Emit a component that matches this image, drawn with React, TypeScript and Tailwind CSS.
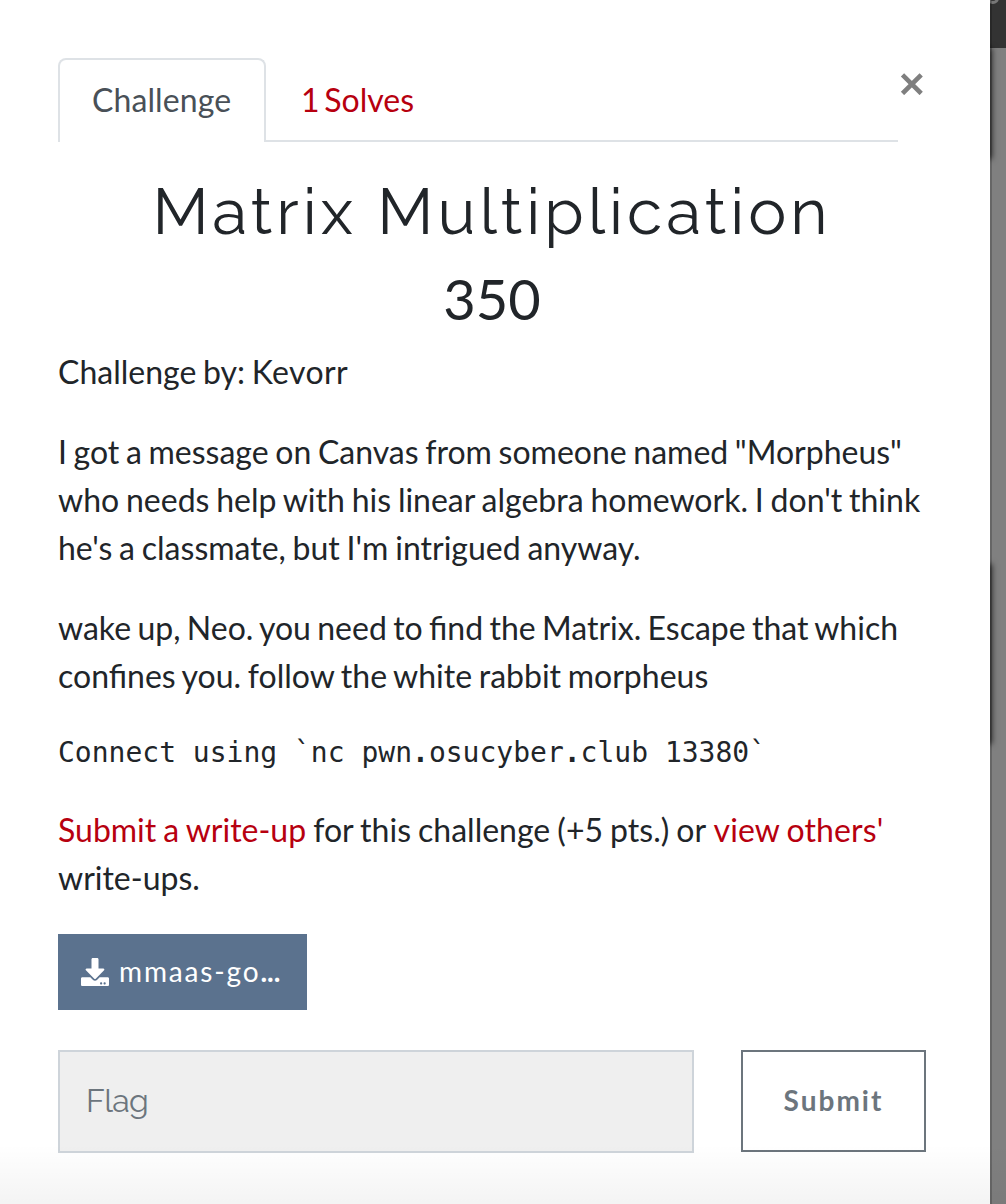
import React from "react";
import { FaDownload } from "react-icons/fa";

export default function App() {
  return (
    <div className="relative h-[1204px] w-[1006px] overflow-hidden bg-[#808080] text-[#212529]">
      <div className="absolute right-0 top-0 h-12 w-4 overflow-hidden bg-[#333333]">
        <div className="absolute -top-[12px] left-[-3px] h-4 w-3 rounded-full border-[3px] border-[#777]" />
      </div>
      <div className="absolute left-[900px] top-12 h-[107px] w-[90px] shadow-[0_2px_6px_2px_rgba(0,0,0,0.7)]" />
      <div className="absolute left-[900px] top-[566px] h-[176px] w-[90px] shadow-[0_0_6px_2px_rgba(0,0,0,0.7)]" />
      <div className="absolute left-[990px] top-0 h-full w-[2px] bg-black/20" />
      <main className="relative h-full w-[990px] bg-white pl-[58px] pr-[64px] pt-[58px] font-['Lato',sans-serif] text-[32px] leading-[48px]">
        <button aria-label="Close" className="absolute left-[900px] top-[73px] h-[22px] w-[24px] text-[#7f7f7f]">
          <svg viewBox="0 0 24 22" className="h-[22px] w-[24px]" stroke="currentColor" strokeWidth="4.6" fill="none">
            <path d="M2.5 1.8 21.2 20.5M21.2 1.8 2.5 20.5" />
          </svg>
        </button>
        <nav className="flex h-[84px] w-[840px] border-b-2 border-[#dee2e6]">
          <div className="h-[84px] w-[208px] rounded-t-lg border-2 border-b-0 border-[#dee2e6] bg-white pl-[32px] pt-[16px] tracking-[0.1px] text-[#495057]">Challenge</div>
          <div className="pl-[35px] pt-[18px] text-[#b7000f] [word-spacing:-3.5px]">1 Solves</div>
        </nav>
        <h2 className="mt-[31px] whitespace-nowrap text-center font-['Raleway','Lato',sans-serif] text-[64px] leading-[77px] tracking-[4px]">Matrix Multiplication</h2>
        <h3 className="mt-[15px] text-center text-[56px] leading-[67px]">350</h3>
        <p className="mt-[16px] [word-spacing:-1.5px]">Challenge by: <span className="tracking-[0.4px]">Kevorr</span></p>
        <p className="mt-8 whitespace-nowrap">
          <span className="[word-spacing:-1.55px]">I got a message on Canvas from someone named "Morpheus"</span><br />
          <span className="[word-spacing:-1.35px]">who needs help with his linear algebra homework. I don't think</span><br />
          <span className="[word-spacing:-1.4px]">he's a classmate, but I'm intrigued anyway.</span>
        </p>
        <p className="mt-8 whitespace-nowrap">
          <span className="[word-spacing:-1.85px]">wake up, Neo. you need to find the Matrix. Escape that which</span><br />
          <span className="[word-spacing:-1.5px]">confines you. follow the white rabbit morpheus</span>
        </p>
        <pre className="mt-8 font-['DejaVu_Sans_Mono',monospace] text-[28px] leading-[42px]">Connect using `nc pwn<b>.</b>osucyber<b>.</b>club 13380`</pre>
        <p className="mt-8 whitespace-nowrap [word-spacing:-1.1px]">
          <span className="text-[#b7000f]">Submit a write-up</span> for this challenge (+5 pts.) or <span className="ml-px tracking-[0.1px] text-[#b7000f]">view others'</span><br />write-ups.
        </p>
        <button className="mt-8 flex h-[76px] w-[249px] items-center bg-[#5b728e] pl-[23px] text-[28px] tracking-[2px] text-white">
          <FaDownload className="mr-[10px]" />
          <span className="relative -top-px tracking-[1.85px]">mmaas-go<b className="tracking-[0px]">...</b></span>
        </button>
        <form className="mt-10 flex">
          <input placeholder="Flag" className="h-[103px] w-[636px] rounded-none border-2 border-[#ced4da] bg-[#efefef] pb-[2px] pl-[26px] font-['Raleway','Lato',sans-serif] text-[32px] tracking-[-0.7px] placeholder:text-[#6c757d] placeholder:opacity-100" />
          <button type="button" className="ml-[47px] h-[102px] w-[185px] border-2 border-[#6c757d] pb-[2px] text-[28px] font-bold tracking-[2px] text-[#6c757d]">Submit</button>
        </form>
      </main>
      <div className="pointer-events-none absolute inset-x-0 bottom-0 h-[60px] bg-gradient-to-b from-transparent to-black/[0.045]" />
    </div>
  );
}
